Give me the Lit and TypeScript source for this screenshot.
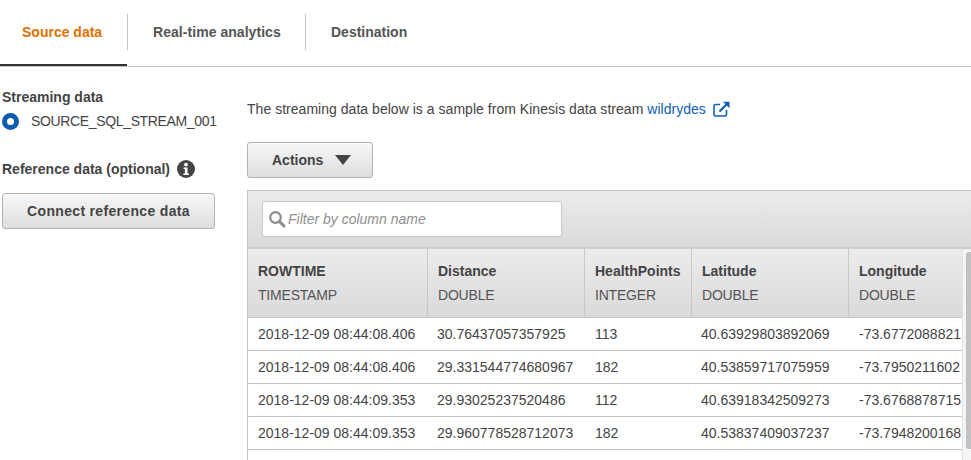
import { LitElement, html, css } from "lit";
import { customElement } from "lit/decorators.js";

const cols = [
  { name: "ROWTIME", type: "TIMESTAMP" },
  { name: "Distance", type: "DOUBLE" },
  { name: "HealthPoints", type: "INTEGER" },
  { name: "Latitude", type: "DOUBLE" },
  { name: "Longitude", type: "DOUBLE" },
];
const rows = [
  ["2018-12-09 08:44:08.406", "30.76437057357925", "113", "40.63929803892069", "-73.6772088821"],
  ["2018-12-09 08:44:08.406", "29.331544774680967", "182", "40.53859717075959", "-73.7950211602"],
  ["2018-12-09 08:44:09.353", "29.93025237520486", "112", "40.63918342509273", "-73.6768878715"],
  ["2018-12-09 08:44:09.353", "29.960778528712073", "182", "40.53837409037237", "-73.7948200168"],
];

@customElement("app-root")
export class AppRoot extends LitElement {
  static styles = css`
    :host { display: block; width: 971px; height: 460px; overflow: hidden; background: #fff; font-family: "Liberation Sans", Arial, sans-serif; font-size: 14px; color: #444; }
    .tabs { display: flex; height: 66px; border-bottom: 1px solid #c4c4c4; box-sizing: content-box; }
    .tab { display: flex; align-items: center; font-weight: 700; color: #555; height: 64px; padding-left: 25px; padding-right: 25px; white-space: nowrap; }
    .tab.active { color: #e07000; width: 127px; box-sizing: border-box; padding-left: 22px; padding-right: 0; height: 66px; border-bottom: 2px solid #333; }
    .tab.second { width: 177px; box-sizing: border-box; padding-right: 0; letter-spacing: 0.05px; }
    .sep { width: 1px; height: 36px; background: #c4c4c4; margin-top: 14px; flex: none; }
    .body { display: flex; height: 393px; }
    .left { width: 247px; flex: none; box-sizing: border-box; padding: 22px 0 0 2px; }
    .h { font-weight: 700; line-height: 16px; }
    .radio-row { display: flex; align-items: center; gap: 12px; margin-top: 8px; height: 17px; }
    .radio { width: 17px; height: 17px; box-sizing: border-box; border: 5px solid #0d5cb0; border-radius: 50%; background: #fff; flex: none; }
    .stream { letter-spacing: -0.35px; margin-bottom: 2px; }
    .ref { display: flex; align-items: center; gap: 7px; margin-top: 30px; height: 18px; }
    .btn { box-sizing: border-box; border: 1px solid #b3b3b3; border-radius: 3px; background: linear-gradient(#f7f7f7, #dedede); font-weight: 700; color: #444; display: flex; align-items: center; justify-content: center; height: 36px; }
    .connect { width: 213px; margin-top: 15px; letter-spacing: 0.33px; }
    .right { flex: 1; min-width: 0; padding-top: 34px; }
    .lede { display: flex; align-items: center; height: 16px; line-height: 16px; white-space: pre; letter-spacing: 0.03px; }
    a { color: #0f5fb5; text-decoration: none; }
    .ext { margin-left: 7px; }
    .actions { width: 126px; margin-top: 25px; gap: 12px; justify-content: flex-start; padding-left: 24px; }
    .tri { width: 0; height: 0; border-left: 8.5px solid transparent; border-right: 8.5px solid transparent; border-top: 10px solid #444; }
    .table { margin-top: 12px; border-left: 1px solid #c4c4c4; border-top: 1px solid #c4c4c4; width: 724px; position: relative; }
    .toolbar { height: 58px; box-sizing: border-box; background: linear-gradient(#ececec, #d9d9d9); border-bottom: 2px solid #cfcfcf; padding: 10px 14px; }
    .filter { width: 300px; height: 36px; box-sizing: border-box; background: #fff; border: 1px solid #c8c8c8; border-radius: 3px; display: flex; align-items: center; padding-left: 5px; gap: 2px; color: #8f8f8f; font-style: italic; }
    .grid { display: grid; grid-template-columns: 180px 157px 107px 157px 123px; }
    .th { height: 69px; box-sizing: border-box; padding: 14px 0 0 10px; background: linear-gradient(#ececec, #dadada); border-right: 1px solid #c8c8c8; border-bottom: 1px solid #c4c4c4; white-space: nowrap; line-height: 16px; }
    .th:nth-child(5) { border-right: none; }
    .th b { display: block; color: #444; }
    .th span { display: block; margin-top: 8px; color: #555; letter-spacing: -0.2px; }
    .td { height: 33px; box-sizing: border-box; border-bottom: 1px solid #c4c4c4; padding: 0 0 0 10px; line-height: 32px; white-space: nowrap; overflow: hidden; color: #444; }
    .td.c2 { padding-left: 9px; }
    .spacer { height: 40px; }
    .sbtrack { position: absolute; right: 0; top: 59px; bottom: 0; width: 10px; background: #f4f4f4; border-left: 1px solid #e4e4e4; box-sizing: border-box; }
    .sb { position: absolute; right: 0; top: 2px; height: 197px; width: 6px; background: #c1c1c1; border-radius: 3px 0 0 3px; }
  `;

  render() {
    return html`
      <div class="tabs">
        <div class="tab active">Source data</div>
        <div class="sep"></div>
        <div class="tab second">Real-time analytics</div>
        <div class="sep"></div>
        <div class="tab">Destination</div>
      </div>
      <div class="body">
        <div class="left">
          <div class="h">Streaming data</div>
          <div class="radio-row"><span class="radio"></span><span class="stream">SOURCE_SQL_STREAM_001</span></div>
          <div class="ref">
            <span class="h">Reference data (optional)</span>
            <svg width="18" height="18" viewBox="0 0 18 18"><circle cx="9" cy="9" r="9" fill="#444"/><circle cx="9" cy="4.6" r="1.9" fill="#fff"/><path d="M6.6 7.4h3.9v6h1.4v1.6H6.4v-1.6h1.5V9H6.6z" fill="#fff"/></svg>
          </div>
          <div class="btn connect">Connect reference data</div>
        </div>
        <div class="right">
          <div class="lede">The streaming data below is a sample from Kinesis data stream <a>wildrydes</a><svg class="ext" width="17" height="16" viewBox="0 0 17 16" fill="none" stroke="#0f5fb5"><path d="M13.5 9v4.5a1.5 1.5 0 0 1-1.5 1.5H2.500a1.500 1.500 0 0 1-1.500-1.500V5a1.500 1.500 0 0 1 1.500-1.500H7" stroke-width="1.600"/><path d="M6.500 10.500L14.500 2.500" stroke-width="2.200"/><path d="M10 .8h6.500v6.500z" fill="#0f5fb5" stroke="none"/></svg></div>
          <div class="btn actions">Actions <span class="tri"></span></div>
          <div class="table">
            <div class="toolbar">
              <div class="filter">
                <svg width="18" height="18" viewBox="0 0 18 18" fill="none" stroke="#8c8c8c"><circle cx="7.500" cy="7.500" r="5.300" stroke-width="2.200"/><path d="M11.500 11.500L16 16" stroke-width="3" stroke-linecap="round"/></svg>
                <span>Filter by column name</span>
              </div>
            </div>
            <div class="grid">
              ${cols.map((c) => html`<div class="th"><b>${c.name}</b><span>${c.type}</span></div>`)}
              ${rows.map((r) => r.map((v, i) => html`<div class="td ${i === 1 || i === 3 ? "c2" : ""}">${v}</div>`))}
            </div>
            <div class="spacer"></div>
            <div class="sbtrack"><div class="sb"></div></div>
          </div>
        </div>
      </div>
    `;
  }
}
